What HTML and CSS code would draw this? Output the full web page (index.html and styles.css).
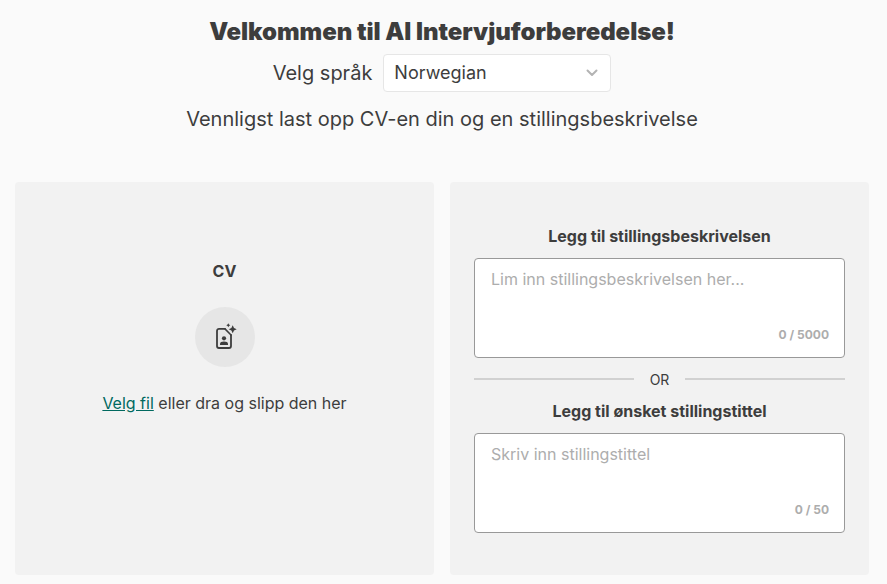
FILE: index.html
```html
<!DOCTYPE html>
<html lang="en">
<head>
  <meta charset="UTF-8">
  <title>AI Intervjuforberedelse</title>
  <link rel="stylesheet" href="styles.css">
</head>
<body>
  <header class="intro">
    <h1>Velkommen til AI Intervjuforberedelse!</h1>
    <div class="language-row">
      <label class="language-label">Velg språk</label>
      <div class="select-box">
        <span class="select-value">Norwegian</span>
        <svg class="chevron" width="12" height="8" viewBox="0 0 12 8" fill="none" stroke="#b3b3b3" stroke-width="2" stroke-linecap="round" stroke-linejoin="round"><path d="M1.500 1.500 6 6l4.500-4.500"/></svg>
      </div>
    </div>
    <p class="subtitle">Vennligst last opp CV-en din og en stillingsbeskrivelse</p>
  </header>

  <main class="panels">
    <section class="panel cv-panel">
      <div class="panel-title">CV</div>
      <div class="upload-icon">
        <svg class="file-icon" width="24" height="24" viewBox="0 0 24 24" fill="none">
          <path d="M12 3.900H6a2 2 0 0 0-2 2V21a2 2 0 0 0 2 2h10a2 2 0 0 0 2-2V10" stroke="#3d3d3d" stroke-width="1.800" stroke-linecap="round"/>
          <path d="M12 3.900l6 6.100" stroke="#3d3d3d" stroke-width="1.500" stroke-linecap="round"/>
          <circle cx="11" cy="13.300" r="2.100" fill="#3d3d3d"/>
          <path d="M7 20v-1.300c0-1.300 1.700-2.100 4-2.100s4 .8 4 2.100V20z" fill="#3d3d3d"/>
          <path d="M19.700.3l1.300 2.700 2.700 1.300-2.700 1.300-1.300 2.700-1.300-2.700-2.700-1.300 2.700-1.300z" fill="#3d3d3d"/>
          <path d="M15.300-1.700l.7 1.300 1.300.7-1.300.7-.7 1.300-.7-1.300-1.300-.7 1.300-.7z" fill="#3d3d3d"/>
        </svg>
      </div>
      <p class="upload-text"><a href="#">Velg fil</a> eller dra og slipp den her</p>
    </section>

    <section class="panel job-panel">
      <div class="panel-title">Legg til stillingsbeskrivelsen</div>
      <div class="text-box">
        <span class="placeholder">Lim inn stillingsbeskrivelsen her...</span>
        <span class="counter">0 / 5000</span>
      </div>
      <div class="divider"><span>OR</span></div>
      <div class="panel-title">Legg til ønsket stillingstittel</div>
      <div class="text-box">
        <span class="placeholder">Skriv inn stillingstittel</span>
        <span class="counter">0 / 50</span>
      </div>
    </section>
  </main>
</body>
</html>
```

FILE: styles.css
```css
* {
  box-sizing: border-box;
}
body {
  margin: 0;
  height: 584px;
  overflow: hidden;
  background-color: #fafafa;
  color: #3d3d3d;
  font-family: Inter, sans-serif;
}
.intro {
  display: flex;
  flex-direction: column;
  align-items: center;
  padding: 17px 3px 0 0;
}
h1 {
  margin: 0;
  font-size: 24px;
  line-height: 30px;
  font-weight: 900;
  letter-spacing: -0.05px;
}
.language-row {
  display: flex;
  align-items: center;
  gap: 11px;
  margin-top: 7px;
}
.language-label {
  font-size: 20px;
}
.select-box {
  display: flex;
  align-items: center;
  justify-content: space-between;
  width: 228px;
  height: 38px;
  padding: 0 12px 0 10px;
  background-color: #fff;
  border: 1px solid #e6e6e6;
  border-radius: 4px;
  font-size: 18px;
}
.select-value {
  padding-bottom: 2px;
}
.subtitle {
  margin: 15px 0 0;
  font-size: 20px;
  line-height: 24px;
}
.panels {
  display: grid;
  grid-template-columns: 1fr 1fr;
  gap: 16px;
  margin-top: 51px;
  padding: 0 18px 0 15px;
}
.panel {
  height: 393px;
  background-color: #f2f2f2;
  border-radius: 4px;
}
.panel-title {
  font-size: 16px;
  font-weight: 700;
  line-height: 20px;
  text-align: center;
}
.cv-panel {
  display: flex;
  flex-direction: column;
  align-items: center;
  padding-top: 79px;
}
.upload-icon {
  display: flex;
  align-items: center;
  justify-content: center;
  width: 60px;
  height: 60px;
  margin-top: 26px;
  border-radius: 50%;
  background-color: #e6e6e6;
}
.file-icon {
  overflow: visible;
}
.upload-text {
  margin: 26px 0 0;
  font-size: 16px;
  line-height: 20px;
}
.upload-text a {
  color: #00695f;
}
.job-panel {
  padding: 44px 24px 0;
}
.text-box {
  position: relative;
  height: 100px;
  margin-top: 12px;
  padding: 8px 16px;
  background-color: #fff;
  border: 1px solid #999;
  border-radius: 4px;
}
.placeholder {
  font-size: 16px;
  line-height: 24px;
  color: #adadad;
}
.counter {
  position: absolute;
  right: 15px;
  bottom: 15px;
  font-size: 12px;
  font-weight: 700;
  color: #adadad;
}
.divider {
  display: flex;
  align-items: center;
  gap: 16px;
  height: 20px;
  margin: 11px 0 12px;
  font-size: 14px;
}
.divider::before,
.divider::after {
  content: "";
  flex: 1;
  height: 2px;
  background-color: #d1d1d1;
}
```
